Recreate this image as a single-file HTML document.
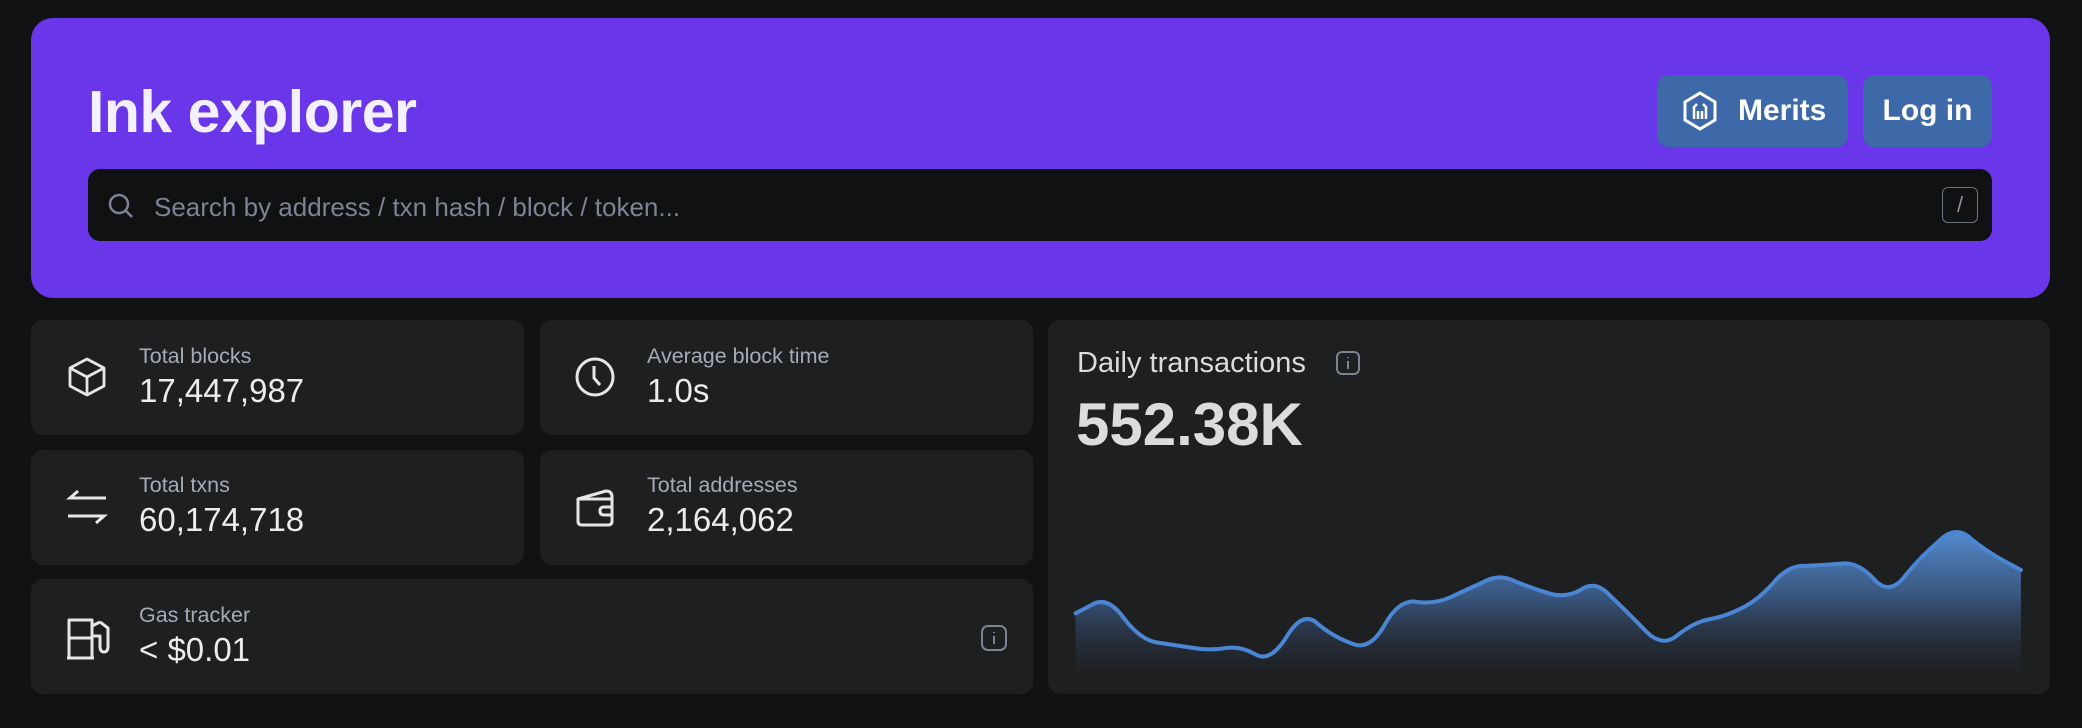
<!DOCTYPE html>
<html><head><meta charset="utf-8"><style>
*{margin:0;padding:0;box-sizing:border-box}
body{width:2082px;height:728px;background:#111214;font-family:"Liberation Sans",sans-serif;position:relative;overflow:hidden}
.abs{position:absolute}
.hdr{left:31px;top:18px;width:2019px;height:280px;background:#6a36e9;border-radius:22px}
.title{left:88px;top:78px;font-size:59px;font-weight:bold;color:#f3f0ff;letter-spacing:-0.5px}
.search{left:88px;top:169px;width:1904px;height:72px;background:#101112;border-radius:12px}
.ph{left:154px;top:192px;font-size:26px;color:#7c8494}
.kbd{left:1942px;top:187px;width:36px;height:36px;border:1.5px solid #6b7280;border-radius:6px;color:#8a909c;font-size:22px;text-align:center;line-height:33px}
.btn{background:#3d69a8;border-radius:12px;color:#fff;font-size:30px;font-weight:bold;height:72px;line-height:72px}
.card{background:#1e1f21;border-radius:12px}
.lbl{font-size:21.5px;color:#a4abb6}
.val{font-size:33px;color:#ececec;font-weight:500}
</style></head><body>
<div class="abs hdr"></div>
<div class="abs title">Ink explorer</div>
<div class="abs btn" style="left:1657px;top:75px;width:191px;padding-left:81px">Merits</div>
<svg class="abs" style="left:1681px;top:91px" width="38" height="40" viewBox="0 0 38 40" fill="none" stroke="#fff" stroke-width="3"><path d="M19 2 L34 11 L34 29 L19 38 L4 29 L4 11 Z"/><path d="M13 28 V16 L16 13 M22 13 L25 16 V28 M17 28 V20 M21 28 V20" stroke-width="2.5"/></svg>
<div class="abs btn" style="left:1863px;top:75px;width:129px;text-align:center">Log in</div>
<div class="abs search"></div>
<svg class="abs" style="left:107px;top:192px" width="28" height="28" viewBox="0 0 28 28" fill="none" stroke="#7c8494" stroke-width="2.5"><circle cx="12" cy="12" r="9"/><path d="M19 19 L25 25"/></svg>
<div class="abs ph">Search by address / txn hash / block / token...</div>
<div class="abs kbd">/</div>

<div class="abs card" style="left:31px;top:320px;width:493px;height:115px"></div>
<div class="abs card" style="left:540px;top:320px;width:493px;height:115px"></div>
<div class="abs card" style="left:31px;top:450px;width:493px;height:115px"></div>
<div class="abs card" style="left:540px;top:450px;width:493px;height:115px"></div>
<div class="abs card" style="left:31px;top:579px;width:1002px;height:115px"></div>
<div class="abs card" style="left:1048px;top:320px;width:1002px;height:374px"></div>

<svg class="abs" style="left:66px;top:356px" width="42" height="42" viewBox="0 0 42 42" fill="none" stroke="#e6e6e6" stroke-width="2.8" stroke-linejoin="round"><path d="M21 3 L38 12 L38 30 L21 39 L4 30 L4 12 Z M4 12 L21 21 L38 12 M21 21 V39"/></svg>
<div class="abs lbl" style="left:139px;top:344px">Total blocks</div>
<div class="abs val" style="left:139px;top:372px">17,447,987</div>

<svg class="abs" style="left:574px;top:356px" width="42" height="42" viewBox="0 0 42 42" fill="none" stroke="#e6e6e6" stroke-width="3"><circle cx="21" cy="21" r="18"/><path d="M20 10 V22 L26 29"/></svg>
<div class="abs lbl" style="left:647px;top:344px">Average block time</div>
<div class="abs val" style="left:647px;top:372px">1.0s</div>

<svg class="abs" style="left:66px;top:488px" width="42" height="38" viewBox="0 0 42 38" fill="none" stroke="#e6e6e6" stroke-width="3"><path d="M40 10 H4 L12 3 M2 28 H38 L30 35"/></svg>
<div class="abs lbl" style="left:139px;top:473px">Total txns</div>
<div class="abs val" style="left:139px;top:501px">60,174,718</div>

<svg class="abs" style="left:574px;top:485px" width="44" height="44" viewBox="0 0 44 44" fill="none" stroke="#e6e6e6" stroke-width="3" stroke-linejoin="round"><path d="M4 14 L32 6 Q38 6 38 12 V36 Q38 40 34 40 H8 Q4 40 4 36 Z M4 14 H38 M38 22 H30 Q26 22 26 26 Q26 30 30 30 H38"/></svg>
<div class="abs lbl" style="left:647px;top:473px">Total addresses</div>
<div class="abs val" style="left:647px;top:501px">2,164,062</div>

<svg class="abs" style="left:66px;top:616px" width="46" height="44" viewBox="0 0 46 44" fill="none" stroke="#e6e6e6" stroke-width="3" stroke-linejoin="round"><path d="M3 42 V4 H26 V42 M1 42 H28 M3 22 H26 M26 10 L34 6 M26 20 H34 V30 Q34 36 38 36 Q42 36 42 30 V12 L34 6"/></svg>
<div class="abs lbl" style="left:139px;top:603px">Gas tracker</div>
<div class="abs val" style="left:139px;top:631px">&lt; $0.01</div>
<svg class="abs" style="left:980px;top:624px" width="28" height="28" viewBox="0 0 28 28" fill="none" stroke="#7c8494" stroke-width="2"><rect x="2" y="2" width="24" height="24" rx="6"/><path d="M14 12 V20 M14 8 V9"/></svg>

<div class="abs" style="left:1077px;top:347px;font-size:29px;color:#dcdcdc">Daily transactions</div>
<svg class="abs" style="left:1335px;top:350px" width="26" height="26" viewBox="0 0 26 26" fill="none" stroke="#7c8494" stroke-width="2"><rect x="2" y="2" width="22" height="22" rx="5"/><path d="M13 11 V19 M13 7 V8"/></svg>
<div class="abs" style="left:1076px;top:390px;font-size:60px;font-weight:bold;color:#dcdcdc">552.38K</div>

<svg class="abs" style="left:1041px;top:400px" width="1041" height="328" viewBox="0 0 1568 984" preserveAspectRatio="none">
<defs><linearGradient id="g" gradientUnits="userSpaceOnUse" x1="0" y1="380" x2="0" y2="812"><stop offset="0" stop-color="#5a96e0" stop-opacity="0.95"/><stop offset="0.5" stop-color="#4a78b8" stop-opacity="0.6"/><stop offset="1" stop-color="#2a3548" stop-opacity="0.1"/></linearGradient></defs>
<path fill="url(#g)" d="M52,640 L76,615 Q100,585 125,655 Q150,720 175,727.5 Q200,735 225,742.5 Q250,752 275,745 Q300,736 322.5,762.5 Q345,790 370,710 Q395,628 417.5,672.5 Q440,710 467.5,730 Q495,755 517.5,675 Q540,594 567.5,606 Q595,612 617.5,591 Q640,570 665,547.5 Q690,518 715,545 Q740,565 765,580 Q790,595 812.5,570 Q835,538 857.5,587.5 Q880,630 907.5,686 Q935,748 960,703.5 Q985,665 1007.5,657.5 Q1030,650 1055,625 Q1080,600 1102.5,550 Q1125,494 1152.5,497.5 Q1180,495 1205,491 Q1230,484 1254,536 Q1278,590 1301.5,527.5 Q1325,470 1351.5,425 Q1378,372 1401.5,417.5 Q1425,455 1450.5,482.5 L1476,510 L1476,812 L52,812 Z"/>
<path fill="none" stroke="#4a86d4" stroke-width="4" vector-effect="non-scaling-stroke" stroke-linejoin="round" stroke-linecap="round" d="M52,640 L76,615 Q100,585 125,655 Q150,720 175,727.5 Q200,735 225,742.5 Q250,752 275,745 Q300,736 322.5,762.5 Q345,790 370,710 Q395,628 417.5,672.5 Q440,710 467.5,730 Q495,755 517.5,675 Q540,594 567.5,606 Q595,612 617.5,591 Q640,570 665,547.5 Q690,518 715,545 Q740,565 765,580 Q790,595 812.5,570 Q835,538 857.5,587.5 Q880,630 907.5,686 Q935,748 960,703.5 Q985,665 1007.5,657.5 Q1030,650 1055,625 Q1080,600 1102.5,550 Q1125,494 1152.5,497.5 Q1180,495 1205,491 Q1230,484 1254,536 Q1278,590 1301.5,527.5 Q1325,470 1351.5,425 Q1378,372 1401.5,417.5 Q1425,455 1450.5,482.5 L1476,510"/>
</svg>
</body></html>
